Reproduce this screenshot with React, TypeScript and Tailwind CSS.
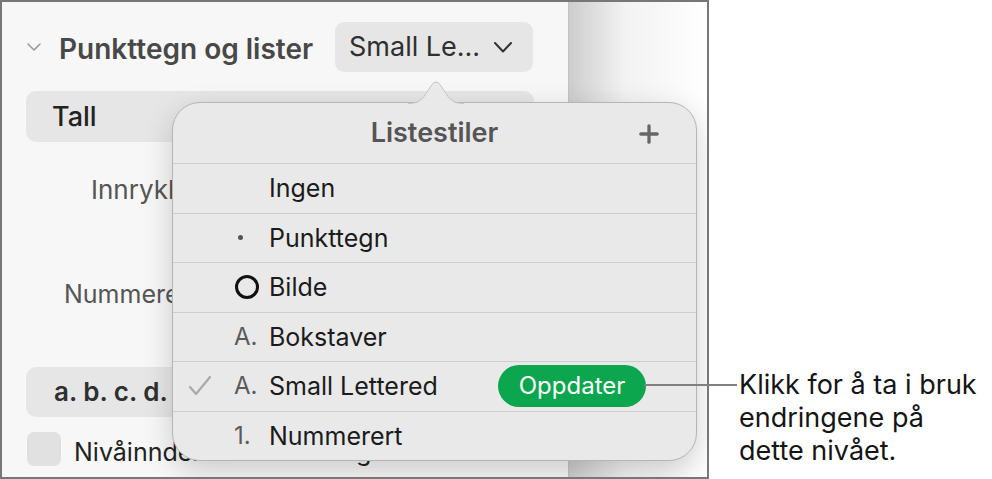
import { Plus } from 'lucide-react';

const font = { fontFamily: 'Inter, "Noto Sans", sans-serif' };

interface ListStyle {
  label: string;
  prefix?: 'dot' | 'ring' | string;
  checked?: boolean;
  update?: boolean;
}

const styles: ListStyle[] = [
  { label: 'Ingen' },
  { label: 'Punkttegn', prefix: 'dot' },
  { label: 'Bilde', prefix: 'ring' },
  { label: 'Bokstaver', prefix: 'A.' },
  { label: 'Small Lettered', prefix: 'A.', checked: true, update: true },
  { label: 'Nummerert', prefix: '1.' },
];

const Prefix = ({ kind }: { kind?: string }) => {
  if (!kind) return null;
  if (kind === 'dot') return <span className="ml-[4px] h-[5px] w-[5px] rounded-full bg-[#555]" />;
  if (kind === 'ring') return <span className="ml-[1px] h-[24px] w-[24px] rounded-full border-[3.5px] border-[#111]" />;
  return <span className="text-[24px] leading-[30px] text-[#5a5a5a]">{kind}</span>;
};

const StylesPopover = () => (
  <div className="absolute left-[170px] top-[100px] w-[525px] rounded-[28px] border border-[#b5b5b5] bg-[#e9e9e9] shadow-[0_10px_30px_rgba(0,0,0,0.18)]">
    {/* arrow pointing at the dropdown */}
    <svg className="absolute left-[235px] top-[-22px]" width="56" height="23" viewBox="0 0 56 23">
      <path d="M0 23 C8 23 12 21 16 16 L24 4 Q28 -1 32 4 L40 16 C44 21 48 23 56 23 Z" fill="#e9e9e9" />
      <path d="M0 22.5 C8 22.5 12 20.5 16 15.5 L24 3.5 Q28 -1.5 32 3.5 L40 15.5 C44 20.5 48 22.5 56 22.5" fill="none" stroke="#c4c4c4" strokeWidth="1" />
    </svg>
    <div className="relative flex h-[60px] items-center justify-center">
      <span className="text-[27px] font-semibold leading-[34px] text-[#555]">Listestiler</span>
      <Plus className="absolute right-[33px] top-[17px] text-[#666]" size={28} strokeWidth={2.8} />
    </div>
    {styles.map((s) => (
      <div key={s.label} className="flex h-[49.5px] items-center border-t border-[#cdcdcd]">
        <div className="flex w-[61px] justify-end">
          {s.checked && (
            <svg width="24" height="22" viewBox="0 0 24 22" className="mr-[22px]">
              <path d="M2 12 L8 19 L22 2" fill="none" stroke="#a9a9a9" strokeWidth="2.2" strokeLinecap="round" strokeLinejoin="round" />
            </svg>
          )}
        </div>
        <div className="flex w-[35px] items-center">
          <Prefix kind={s.prefix} />
        </div>
        <span className="text-[25px] leading-[30px] text-[#1b1b1b]">{s.label}</span>
        {s.update && (
          <span className="ml-auto mr-[50px] flex h-[42px] w-[148px] items-center justify-center rounded-full bg-[#0ba64d] text-[24px] leading-[30px] text-white">
            Oppdater
          </span>
        )}
      </div>
    ))}
  </div>
);

const Sidebar = () => (
  <div className="flex w-[567px] shrink-0 flex-col border-r border-[#c4c4c4] bg-[#f7f7f7] pt-[20px]">
    <div className="flex h-[50px] items-center">
      <svg className="ml-[25px]" width="14" height="8" viewBox="0 0 14 8">
        <path d="M1 1 L7 7 L13 1" fill="none" stroke="#9a9a9a" strokeWidth="1.6" strokeLinecap="round" strokeLinejoin="round" />
      </svg>
      <span className="ml-[18px] mt-[3px] text-[28px] font-semibold leading-[34px] text-[#484848]">Punkttegn og lister</span>
      <div className="ml-auto mr-[35px] flex h-[50px] w-[198px] items-center rounded-[9px] bg-[#e6e6e6] pl-[14px]">
        <span className="text-[27px] leading-[34px] text-[#2f2f2f]">Small Le...</span>
        <svg className="ml-[14px]" width="18" height="11" viewBox="0 0 18 11">
          <path d="M1 1 L9 9.5 L17 1" fill="none" stroke="#333" strokeWidth="2" strokeLinecap="round" strokeLinejoin="round" />
        </svg>
      </div>
    </div>
    <div className="ml-[24px] mt-[19px] flex h-[51px] w-[508px] items-center rounded-[10px] bg-[#e6e6e6] pl-[26px]">
      <span className="text-[27px] font-medium leading-[34px] text-[#222]">Tall</span>
    </div>
    <div className="ml-[89px] mt-[33px] text-[26px] leading-[30px] text-[#555]">Innrykk</div>
    <div className="ml-[62px] mt-[74px] text-[25px] leading-[30px] text-[#555]">Nummerering</div>
    <div className="ml-[24px] mt-[58px] flex h-[50px] w-[508px] items-center rounded-[10px] bg-[#e6e6e6] pl-[28px]">
      <span className="text-[26px] font-semibold leading-[30px] text-[#2f2f2f]">a. b. c. d.</span>
    </div>
    <div className="ml-[25px] mt-[15px] flex items-start">
      <span className="h-[34px] w-[34px] rounded-[7px] bg-[#e1e1e1]" />
      <span className="ml-[13px] mt-[5px] text-[25px] leading-[30px] text-[#222]">Nivåinndelt nummerering</span>
    </div>
  </div>
);

export default function App() {
  return (
    <div className="relative flex h-[479px] w-[992px] bg-white" style={font}>
      <div className="relative flex h-[479px] w-[709px] shrink-0 overflow-hidden border-2 border-[#777]">
        <Sidebar />
        <div className="flex-1 bg-linear-to-r from-[#cdcdcd] via-[#f2f2f2] via-40% to-white" />
        <StylesPopover />
      </div>
      {/* leader line from the update button to its note */}
      <div className="absolute left-[644px] top-[384px] h-[2px] w-[93px] bg-[#808080]" />
      <p className="ml-[30px] mt-[368px] text-[27px] leading-[33px] text-[#151515]">
        Klikk for å ta i bruk
        <br />
        endringene på
        <br />
        dette nivået.
      </p>
    </div>
  );
}
